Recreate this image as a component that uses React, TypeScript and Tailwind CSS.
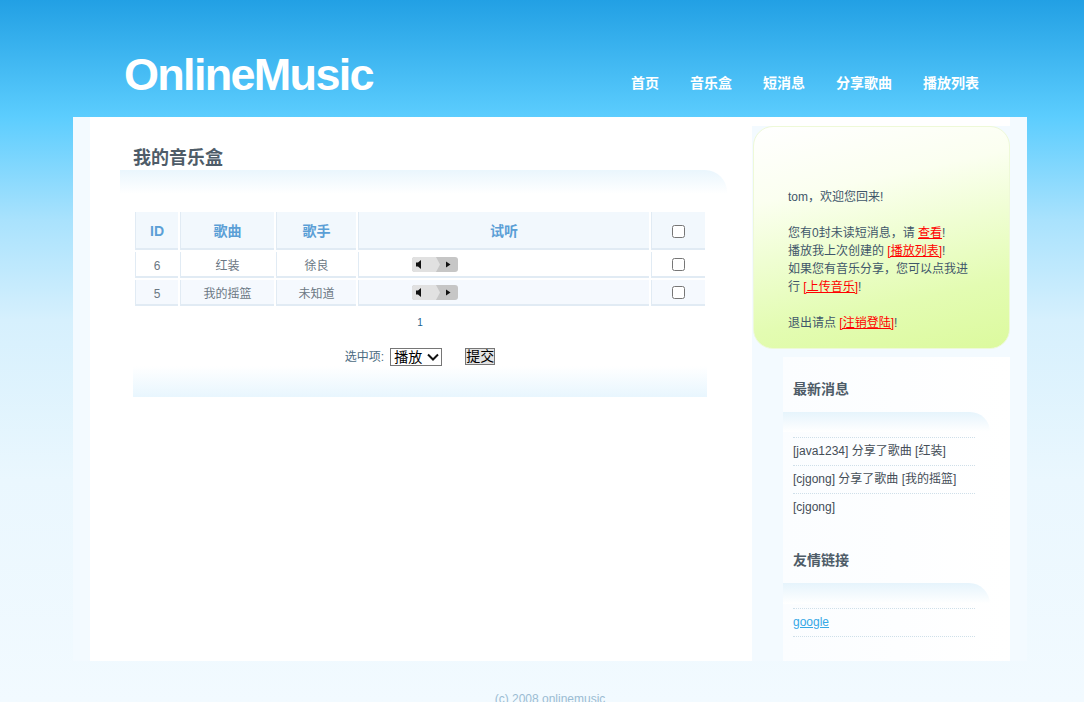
import React from "react";

const font = { fontFamily: '"Liberation Sans", "Noto Sans CJK SC", sans-serif' };

function Player() {
  return (
    <svg width="46" height="15" viewBox="0 0 46 15" className="inline-block align-middle">
      <rect x="0" y="0" width="46" height="15" rx="3" fill="#c6c6c6" />
      <path d="M3 0 H24 L28 7.5 L24 15 H3 A3 3 0 0 1 0 12 V3 A3 3 0 0 1 3 0 Z" fill="#e1e1e1" />
      <rect x="4" y="5.5" width="2" height="4" fill="#111" />
      <polygon points="6,5.5 9,3 9,12 6,9.5" fill="#111" />
      <polygon points="34,4.5 38.5,7.5 34,10.5" fill="#111" />
    </svg>
  );
}

function Check() {
  return <input type="checkbox" className="w-[13px] h-[13px] align-middle m-0" readOnly />;
}

const th = "bg-[#f2f8fd] border-l border-b-2 border-[#e1ebf4] text-[#5b9fd6] font-bold text-[14px] text-center pt-[2px]";
const tdBase = "border-l border-b-2 border-[#e1ebf4] text-[#6b7783] text-[12px] text-center";
const td = tdBase + " pt-[3px]";

export default function App() {
  return (
    <div
      style={font}
      className="w-full min-h-[702px] overflow-hidden bg-[linear-gradient(180deg,#22a0e4_0px,#5ccdfe_117px,#a9e2fd_220px,#d6f0fd_320px,#eaf7fe_480px,#f2faff_702px)]"
    >
      {/* Header */}
      <div className="ml-[73px] w-[954px] h-[117px] flex justify-between items-start">
        <div className="ml-[51px] mt-[52px] text-[45px] leading-[45px] font-bold text-white tracking-[-1.7px]">
          OnlineMusic
        </div>
        <nav className="mt-[73px] mr-[48px] flex gap-[31px] text-[14px] leading-[20px] font-bold text-white">
          <span>首页</span>
          <span>音乐盒</span>
          <span>短消息</span>
          <span>分享歌曲</span>
          <span>播放列表</span>
        </nav>
      </div>

      {/* Body */}
      <div className="ml-[73px] w-[954px] h-[544px] flex">
        <div className="w-[17px] bg-[#f3faff]" />
        {/* Main */}
        <div className="w-[662px] bg-white pt-[29px]">
          <h2 className="pl-[43px] text-[18px] leading-[24px] font-bold text-[#4e5c68]">我的音乐盒</h2>
          <div className="ml-[30px] w-[607px] h-[24px] rounded-tr-[22px] bg-gradient-to-b from-[#eaf6fd] to-white" />
          <table className="ml-[43px] mt-[16px] w-[574px] table-fixed border-separate border-spacing-[2px]">
            <colgroup>
              <col className="w-[43px]" />
              <col className="w-[94px]" />
              <col className="w-[80px]" />
              <col className="w-[291px]" />
              <col className="w-[54px]" />
            </colgroup>
            <thead>
              <tr className="h-[38px]">
                <th className={th}>ID</th>
                <th className={th}>歌曲</th>
                <th className={th}>歌手</th>
                <th className={th}>试听</th>
                <th className={th}>
                  <Check />
                </th>
              </tr>
            </thead>
            <tbody>
              <tr className="h-[26px] bg-white">
                <td className={td}>6</td>
                <td className={td}>红装</td>
                <td className={td}>徐良</td>
                <td className={tdBase + " !text-left pl-[53px]"}>
                  <Player />
                </td>
                <td className={tdBase}>
                  <Check />
                </td>
              </tr>
              <tr className="h-[26px] bg-[#f5f9fe]">
                <td className={td}>5</td>
                <td className={td}>我的摇篮</td>
                <td className={td}>未知道</td>
                <td className={tdBase + " !text-left pl-[53px]"}>
                  <Player />
                </td>
                <td className={tdBase}>
                  <Check />
                </td>
              </tr>
            </tbody>
          </table>
          <div className="ml-[43px] w-[574px] mt-[7px] text-center text-[10px] leading-[16px] text-[#1d5f8e]">1</div>
          <div className="ml-[43px] w-[574px] mt-[17px] h-[18px] flex justify-center items-start">
            <span className="text-[12px] leading-[18px] text-[#4b6b82] mr-[6px]">选中项:</span>
            <div className="w-[52px] h-[18px] border border-[#767676] flex items-center pl-[3px] text-[14px] leading-[16px] text-black">
              <span>播放</span>
              <svg width="12" height="8" viewBox="0 0 12 8" className="ml-[5px]">
                <path d="M1 1.5 L6 6.5 L11 1.5" fill="none" stroke="#111" strokeWidth="2" />
              </svg>
            </div>
            <div className="ml-[23px] w-[30px] h-[17px] border border-[#767676] bg-[#e3e3e3] text-[14px] leading-[15px] text-black text-center whitespace-nowrap overflow-hidden">
              提交
            </div>
          </div>
          <div className="ml-[43px] w-[574px] h-[31px] bg-gradient-to-b from-white to-[#e8f6fe]" />
        </div>

        {/* Sidebar */}
        <div className="w-[258px] bg-[#f3faff] flex flex-col">
          <div className="h-[9px] bg-white" />
          <div className="ml-[1px] h-[223px] rounded-[20px] border border-[#eef9d8] bg-[linear-gradient(168deg,#ffffff_0%,#fbfff0_28%,#effed2_50%,#e3fcb2_75%,#dcfa9e_100%)] pl-[34px] pt-[61px]">
            <div className="w-[188px] text-[12px] leading-[18px] text-[#3f566a]">
              <p>tom，欢迎您回来!</p>
              <p className="h-[18px]" />
              <p>
                您有0封未读短消息，请 <a className="text-[#ff0000] underline">查看</a>!
              </p>
              <p>
                播放我上次创建的 <a className="text-[#ff0000] underline">[播放列表]</a>!
              </p>
              <p>
                如果您有音乐分享，您可以点我进行 <a className="text-[#ff0000] underline">[上传音乐]</a>!
              </p>
              <p className="h-[18px]" />
              <p>
                退出请点 <a className="text-[#ff0000] underline">[注销登陆]</a>!
              </p>
            </div>
          </div>
          <div className="ml-[31px] mt-[8px] flex-1 bg-gradient-to-r from-[#fbfdff] to-white pt-[22px]">
            <h3 className="pl-[10px] text-[14px] leading-[20px] font-bold text-[#4e5c68]">最新消息</h3>
            <div className="mt-[13px] w-[207px] h-[20px] rounded-tr-[22px] bg-gradient-to-b from-[#e6f4fc] to-white" />
            <div className="ml-[10px] w-[182px] mt-[5px] text-[12px] leading-[27px] text-[#444d57]">
              <div className="border-t border-dotted border-[#cfdfe9]">[java1234] 分享了歌曲 [红装]</div>
              <div className="border-t border-dotted border-[#cfdfe9]">[cjgong] 分享了歌曲 [我的摇篮]</div>
              <div className="border-t border-dotted border-[#cfdfe9]">[cjgong]</div>
            </div>
            <h3 className="mt-[29px] pl-[10px] text-[14px] leading-[20px] font-bold text-[#4e5c68]">友情链接</h3>
            <div className="mt-[13px] w-[207px] h-[21px] rounded-tr-[22px] bg-gradient-to-b from-[#e6f4fc] to-white" />
            <div className="ml-[10px] w-[182px] mt-[4px] text-[12px] leading-[27px]">
              <div className="border-t border-b border-dotted border-[#cfdfe9]">
                <a className="text-[#36a8e6] underline">google</a>
              </div>
            </div>
          </div>
        </div>
        <div className="w-[17px] bg-[#f3faff]" />
      </div>

      {/* Footer */}
      <div className="ml-[73px] w-[954px] mt-[30px] text-center text-[12px] leading-[16px] text-[#9bbcd3]">
        (c) 2008 onlinemusic
      </div>
    </div>
  );
}
